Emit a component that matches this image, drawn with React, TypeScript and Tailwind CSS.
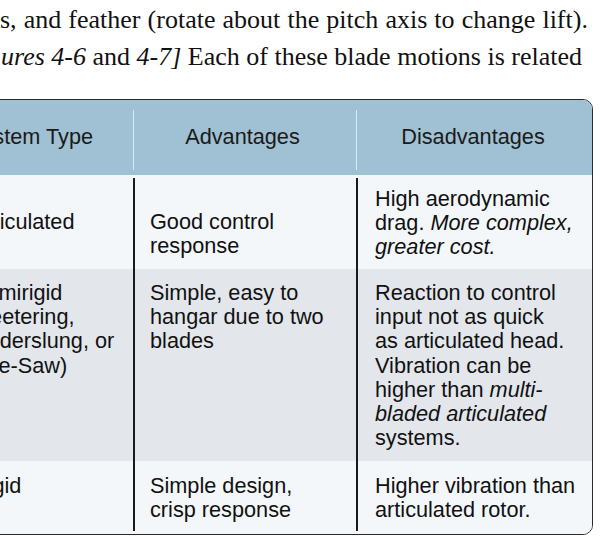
import React from "react";

const sans = { fontFamily: '"Liberation Sans", Arial, Helvetica, sans-serif' };

function Cell({ children, className = "" }: { children: React.ReactNode; className?: string }) {
  return <div className={`whitespace-nowrap ${className}`}>{children}</div>;
}

export default function App() {
  return (
    <div className="w-[600px] h-[536px] overflow-hidden bg-white relative">
      <div
        className="pt-[1px] text-[26px] leading-[37px] text-[#111] whitespace-nowrap"
        style={{ fontFamily: '"Liberation Serif", "Times New Roman", serif' }}
      >
        <div className="pl-[0px] [word-spacing:0.6px]">
          s, and feather (rotate about the pitch axis to change lift).
        </div>
        <div className="pl-[1px]">
          <i>ures 4-6</i> and <i>4-7]</i> Each of these blade motions is related
        </div>
      </div>

      <div
        className="mt-[24px] ml-[-116px] w-[709px] border-[1.5px] border-[#2b2b2b] rounded-[10px] overflow-hidden text-[21.7px] leading-[24.2px] text-[#111]"
        style={sans}
      >
        {/* Header */}
        <div className="relative grid grid-cols-[248px_223px_1fr] h-[75px] bg-[#a0c1d3] text-[#1a1a1a]">
          <div className="flex items-center justify-center pr-[16px]">Rotor System Type</div>
          <div className="flex items-center justify-center pr-[4px]">Advantages</div>
          <div className="flex items-center justify-center pr-[2px]">Disadvantages</div>
          <div className="absolute left-[248px] top-[10px] bottom-[5px] w-[1px] bg-[#d9e9f2]" />
          <div className="absolute left-[471px] top-[10px] bottom-[5px] w-[1px] bg-[#d9e9f2]" />
        </div>

        {/* Body */}
        <div className="relative">
          <div className="grid grid-cols-[248px_223px_1fr] h-[94px] bg-[#f4f7fa]">
            <Cell className="pl-[87px] pt-[35px]">Articulated</Cell>
            <Cell className="pl-[17px] pt-[35px]">
              Good control
              <br />
              response
            </Cell>
            <Cell className="pl-[19px] pt-[12px]">
              High aerodynamic
              <br />
              drag. <i>More complex,</i>
              <br />
              <i>greater cost.</i>
            </Cell>
          </div>

          <div className="grid grid-cols-[248px_223px_1fr] h-[192px] bg-[#e3e7ec]">
            <Cell className="pl-[87px] pt-[12px]">
              Semirigid
              <br />
              (Teetering,
              <br />
              Underslung, or
              <br />
              See-Saw)
            </Cell>
            <Cell className="pl-[17px] pt-[12px]">
              Simple, easy to
              <br />
              hangar due to two
              <br />
              blades
            </Cell>
            <Cell className="pl-[19px] pt-[12px]">
              Reaction to control
              <br />
              input not as quick
              <br />
              as articulated head.
              <br />
              Vibration can be
              <br />
              higher than <i>multi-</i>
              <br />
              <i>bladed articulated</i>
              <br />
              systems.
            </Cell>
          </div>

          <div className="grid grid-cols-[248px_223px_1fr] h-[72.5px] bg-[#f4f7fa]">
            <Cell className="pl-[87px] pt-[13px]">Rigid</Cell>
            <Cell className="pl-[17px] pt-[13px]">
              Simple design,
              <br />
              crisp response
            </Cell>
            <Cell className="pl-[19px] pt-[13px]">
              Higher vibration than
              <br />
              articulated rotor.
            </Cell>
          </div>

          <div className="absolute left-[248px] top-[3px] bottom-[2.5px] w-[1.5px] bg-[#1a1a1a]" />
          <div className="absolute left-[471px] top-[3px] bottom-[2.5px] w-[1.5px] bg-[#1a1a1a]" />
        </div>
      </div>
    </div>
  );
}
